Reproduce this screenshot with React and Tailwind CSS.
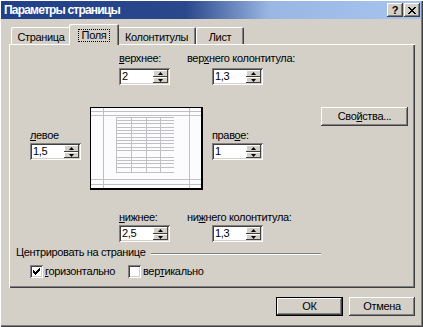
import React from 'react';

const raised =
  'bg-[#d4d0c8] shadow-[inset_-1px_-1px_#404040,inset_1px_1px_#ffffff,inset_-2px_-2px_#808080,inset_2px_2px_#d4d0c8]';
const sunken =
  'bg-white shadow-[inset_1px_1px_#808080,inset_-1px_-1px_#ffffff,inset_2px_2px_#404040,inset_-2px_-2px_#d4d0c8]';

function Arrow({ up }) {
  return (
    <svg width="5" height="3" viewBox="0 0 5 3">
      {up ? <path d="M2.5 0 L5 3 L0 3 Z" fill="#000" /> : <path d="M0 0 L5 0 L2.5 3 Z" fill="#000" />}
    </svg>
  );
}

function SpinBox({ value }) {
  return (
    <div className={`flex h-[17px] w-[51px] p-[2px] ${sunken}`}>
      <div className="flex-1 pl-[1px] text-[11px] leading-[13px]">{value}</div>
      <div className="flex w-[15px] flex-col">
        <div className="flex h-[7px] items-center justify-center bg-[#d4d0c8] shadow-[inset_-1px_-1px_#404040,inset_1px_1px_#ffffff]">
          <Arrow up />
        </div>
        <div className="flex h-[6px] items-center justify-center bg-[#d4d0c8] shadow-[inset_-1px_-1px_#404040,inset_1px_1px_#ffffff]">
          <Arrow />
        </div>
      </div>
    </div>
  );
}

function Label({ before, u, after }) {
  return (
    <div className="h-[13px] whitespace-nowrap text-[11px] leading-[13px]">
      {before}
      <u>{u}</u>
      {after}
    </div>
  );
}

function Preview() {
  const rows = [9, 12, 15, 19, 22, 25, 29, 32, 35, 39, 42, 49, 52, 55, 59, 64];
  const cols = [25, 40, 55, 69];
  return (
    <div className="h-[83px] w-[113px] border-t border-l border-r-2 border-b-2 border-black bg-[#fcfcff]">
      <svg width="110" height="80" viewBox="0 0 110 80" shapeRendering="crispEdges">
        <g stroke="#c0c0c4" strokeWidth="1">
          <line x1="12.5" y1="0" x2="12.5" y2="80" />
          <line x1="98.5" y1="0" x2="98.5" y2="80" />
          <line x1="0" y1="3.5" x2="110" y2="3.5" />
          <line x1="0" y1="7.5" x2="110" y2="7.5" />
          <line x1="0" y1="71.5" x2="110" y2="71.5" />
          <line x1="0" y1="76.5" x2="110" y2="76.5" />
          {rows.map((y) => (
            <line key={'r' + y} x1="25" y1={y + 0.5} x2="83" y2={y + 0.5} />
          ))}
          {cols.map((x) => (
            <line key={'c' + x} x1={x + 0.5} y1="9" x2={x + 0.5} y2="65" />
          ))}
        </g>
      </svg>
    </div>
  );
}

function Checkbox({ checked }) {
  return (
    <div className={`flex h-[13px] w-[13px] items-center justify-center ${sunken}`}>
      {checked && (
        <svg width="7" height="7" viewBox="0 0 7 7" shapeRendering="crispEdges">
          <path
            d="M6 0h1v1h-1z M5 1h2v1h-2z M0 2h1v1h-1z M4 2h3v1h-3z M0 3h2v1h-2z M3 3h3v1h-3z M0 4h5v1h-5z M1 5h3v1h-3z M2 6h1v1h-1z"
            fill="#000"
          />
        </svg>
      )}
    </div>
  );
}

function Tab({ children, active, className }) {
  if (active) {
    return (
      <div
        className={`relative z-10 -mx-[2px] -mb-[1px] flex h-[21px] items-start justify-center rounded-t-[2px] bg-[#d4d0c8] pt-[5px] shadow-[inset_1px_1px_#ffffff,inset_-1px_0_#404040,inset_-2px_0_#808080] ${className}`}
      >
        <span className="border border-dotted border-black px-[3px] text-[11px] leading-[11px]">{children}</span>
      </div>
    );
  }
  return (
    <div
      className={`flex h-[17px] items-start justify-center rounded-t-[2px] bg-[#d4d0c8] pt-[4px] text-[11px] leading-[12px] shadow-[inset_1px_1px_#ffffff,inset_-1px_0_#404040,inset_-2px_0_#808080] ${className}`}
    >
      {children}
    </div>
  );
}

export default function App() {
  return (
    <div className="relative h-[327px] w-[423px] overflow-hidden bg-[#d4d0c8] font-['Liberation_Sans',Arial,sans-serif] tracking-[-0.35px] text-black shadow-[inset_1px_1px_#ffffff,inset_-1px_-1px_#404040,inset_-2px_-2px_#808080]">
      {/* title bar */}
      <div className="ml-[1px] mr-[2px] mt-[1px] flex h-[18px] items-center bg-[linear-gradient(90deg,#22408a_0%,#2a488c_44%,#9ab7e4_64%,#a6c4ee_100%)] pl-[3px] pr-[1px]">
        <div className="flex-1 text-[12px] font-bold leading-[14px] tracking-[-0.8px] text-white">Параметры страницы</div>
        <div className={`flex h-[14px] w-[16px] items-center justify-center text-[11px] font-bold leading-none ${raised}`}>?</div>
        <div className={`ml-[1px] flex h-[14px] w-[16px] items-center justify-center ${raised}`}>
          <svg width="8" height="7" viewBox="0 0 8 7" shapeRendering="crispEdges">
            <path d="M0 0h2l2 2.5 2-2.5h2l-3 3.5 3 3.5h-2l-2-2.5-2 2.5h-2l3-3.5z" fill="#000" />
          </svg>
        </div>
      </div>

      {/* tabs */}
      <div className="ml-[9px] mt-[6px] flex h-[19px] items-end pl-[2px]">
        <Tab className="w-[60px]">Страница</Tab>
        <Tab active className="w-[50px]">Поля</Tab>
        <Tab className="w-[79px]">Колонтитулы</Tab>
        <Tab className="w-[48px]">Лист</Tab>
      </div>

      {/* tab panel */}
      <div className="ml-[9px] flex h-[244px] w-[406px] flex-col text-[11px] shadow-[inset_1px_1px_#ffffff,inset_-1px_-1px_#404040,inset_-2px_-2px_#808080]">
        {/* top row */}
        <div className="mt-[8px] flex pl-[110px]">
          <div className="w-[68px]">
            <Label u="в" after="ерхнее:" />
          </div>
          <Label before="вер" u="х" after="него колонтитула:" />
        </div>
        <div className="mt-[3px] flex pl-[110px]">
          <SpinBox value="2" />
          <div className="ml-[42px]">
            <SpinBox value="1,3" />
          </div>
        </div>

        {/* middle row */}
        <div className="mt-[22px] flex h-[83px] items-start">
          <div className="ml-[21px] mt-[22px] flex w-[51px] flex-col gap-[1px]">
            <Label u="л" after="евое" />
            <SpinBox value="1,5" />
          </div>
          <div className="ml-[9px]">
            <Preview />
          </div>
          <div className="ml-[9px] mt-[22px] flex w-[51px] flex-col gap-[1px]">
            <Label before="прав" u="о" after="е:" />
            <SpinBox value="1" />
          </div>
          <div className={`ml-[58px] flex h-[19px] w-[87px] items-center justify-center text-[11px] ${raised}`}>
            Сво<u>й</u>ства...
          </div>
        </div>

        {/* bottom row */}
        <div className="mt-[21px] flex pl-[110px]">
          <div className="w-[68px]">
            <Label u="н" after="ижнее:" />
          </div>
          <Label before="ни" u="ж" after="него колонтитула:" />
        </div>
        <div className="mt-[1px] flex pl-[110px]">
          <SpinBox value="2,5" />
          <div className="ml-[42px]">
            <SpinBox value="1,3" />
          </div>
        </div>

        {/* centering group */}
        <div className="mt-[4px] flex items-start pl-[7px]">
          <div className="h-[13px] whitespace-nowrap leading-[13px]">Центрировать на странице</div>
          <div className="ml-[6px] mt-[7px] h-[2px] flex-1 mr-[94px] border-t border-b border-t-[#808080] border-b-white" />
        </div>
        <div className="mt-[6px] flex items-center pl-[21px]">
          <div className="flex w-[98px] items-center">
            <Checkbox checked />
            <div className="ml-[2px] leading-[13px]">
              <u>г</u>оризонтально
            </div>
          </div>
          <Checkbox />
          <div className="ml-[2px] leading-[13px]">
            вер<u>т</u>икально
          </div>
        </div>
      </div>

      {/* buttons */}
      <div className="mt-[9px] flex justify-end gap-[6px] pr-[8px] text-[11px]">
        <div className="flex h-[19px] w-[67px] items-center justify-center bg-[#d4d0c8] shadow-[inset_0_0_0_1px_#000,inset_-2px_-2px_#404040,inset_2px_2px_#ffffff,inset_-3px_-3px_#808080]">
          ОК
        </div>
        <div className={`flex h-[19px] w-[66px] items-center justify-center ${raised}`}>Отмена</div>
      </div>
    </div>
  );
}
